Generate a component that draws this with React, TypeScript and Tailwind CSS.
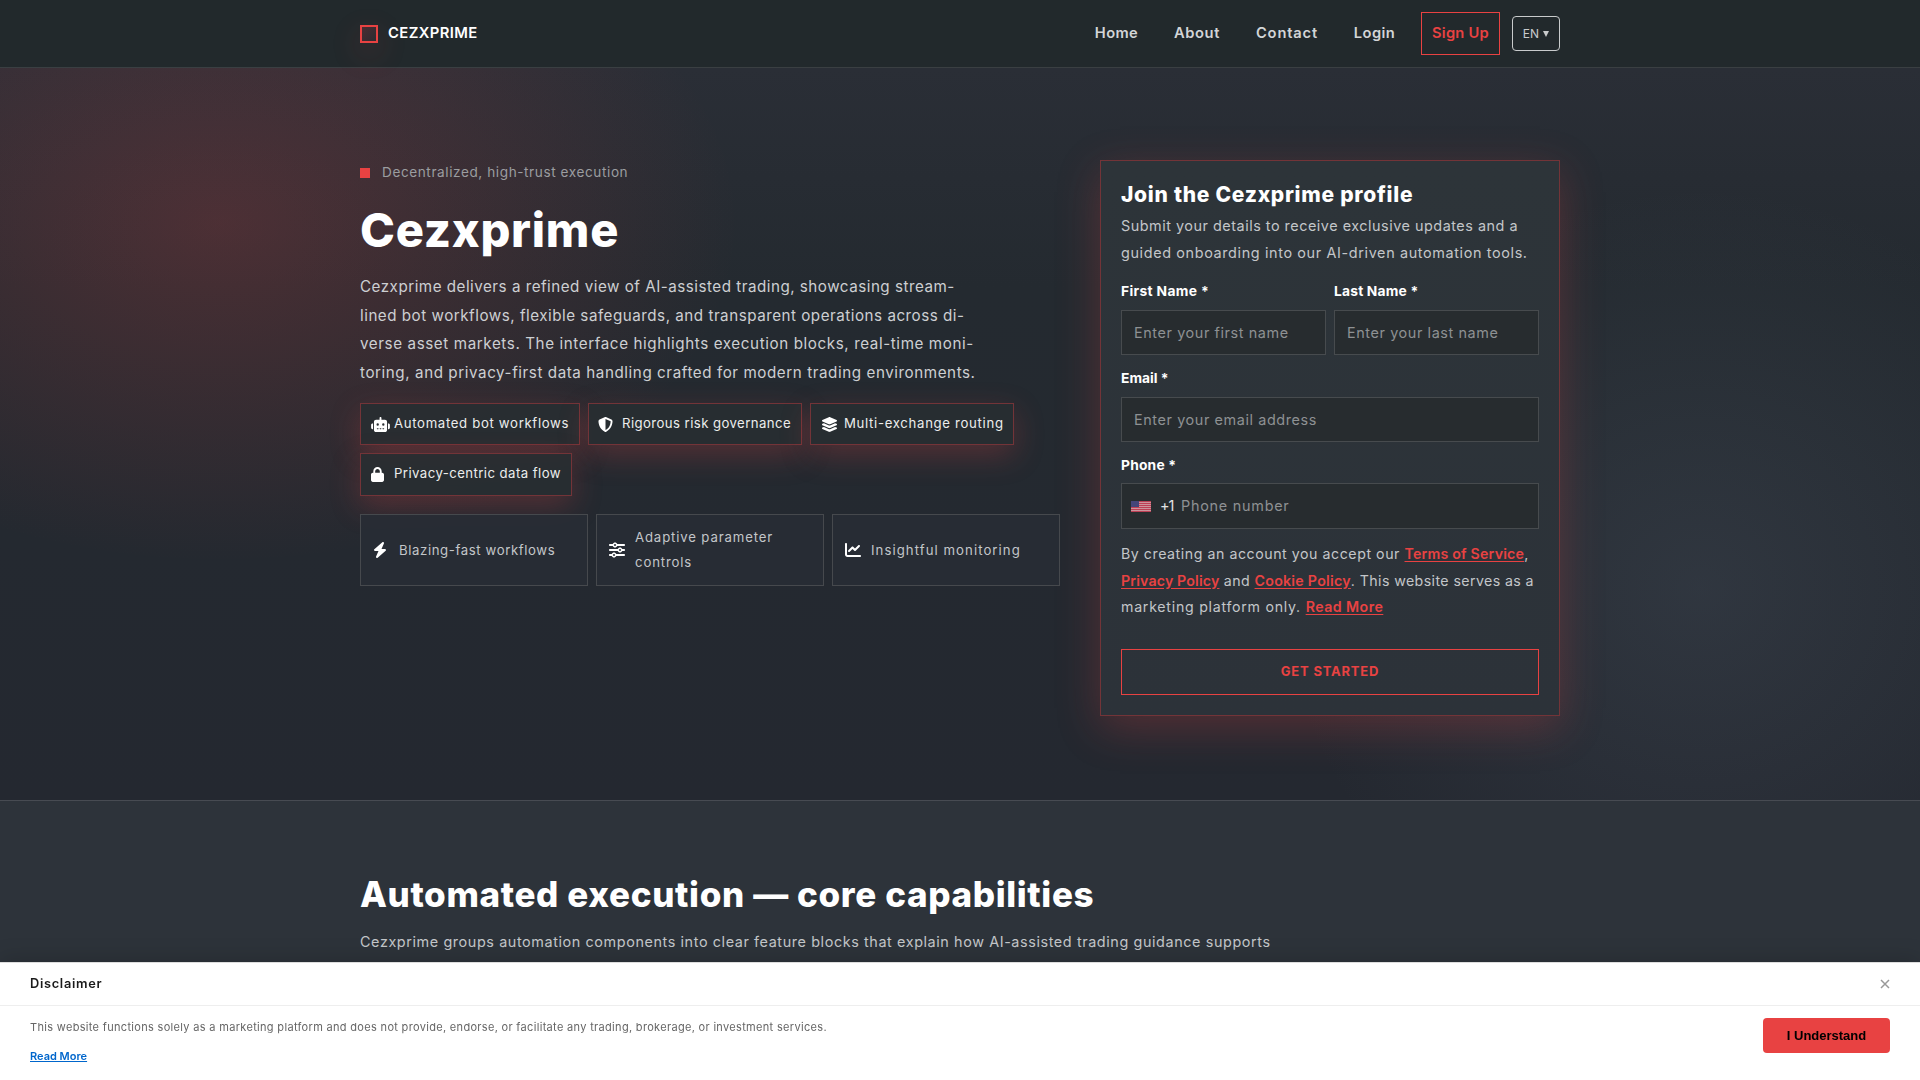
import {
  FaBolt,
  FaChartLine,
  FaLayerGroup,
  FaLock,
  FaRobot,
  FaShieldHalved,
  FaSliders,
} from "react-icons/fa6";

const navLinks = [
  { label: "Home", style: "w-[63px] tracking-[0.4px]" },
  { label: "About", style: "w-[66px] tracking-[0.6px]" },
  { label: "Contact", style: "w-[82px] tracking-[0.85px]" },
  { label: "Login", style: "w-[61px] tracking-[0.45px]" },
];

const introLines = [
  { text: "Cezxprime delivers a refined view of AI-assisted trading, showcasing stream-", style: "tracking-[0.5px]" },
  { text: "lined bot workflows, flexible safeguards, and transparent operations across di-", style: "tracking-[0.51px]" },
  { text: "verse asset markets. The interface highlights execution blocks, real-time moni-", style: "tracking-[0.595px]" },
  { text: "toring, and privacy-first data handling crafted for modern trading environments.", style: "tracking-[0.567px]" },
];

const chips = [
  { icon: <FaRobot className="w-[19px] h-[15px]" />, label: "Automated bot workflows", style: "w-[220px] h-[42px] tracking-[0.66px]" },
  { icon: <FaShieldHalved className="-ml-px w-[15px] h-[15px]" />, label: "Rigorous risk governance", style: "w-[214px] h-[42px] tracking-[0.42px]" },
  { icon: <FaLayerGroup className="w-[17px] h-[15px]" />, label: "Multi-exchange routing", style: "w-[204px] h-[42px] tracking-[0.675px]" },
  { icon: <FaLock className="w-[13px] h-[15px]" />, label: "Privacy-centric data flow", style: "w-[212px] h-[43px] pb-px tracking-[0.43px]" },
];

const highlights = [
  { icon: <FaBolt className="w-[14px] h-4" />, label: "Blazing-fast workflows", style: "tracking-[0.6px]" },
  { icon: <FaSliders className="w-4 h-4" />, label: "Adaptive parameter controls", style: "pb-px tracking-[0.85px]" },
  { icon: <FaChartLine className="w-4 h-4" />, label: "Insightful monitoring", style: "tracking-[1.05px]" },
];

function Field({ label, placeholder, style }: { label: string; placeholder: string; style: string }) {
  return (
    <label className="block flex-1">
      <span className={`block text-[13.8px] leading-6 font-bold text-white ${style}`}>{label}</span>
      <input
        className="mt-[7px] block w-full h-[45px] px-3 border border-[#474b4e] bg-[#272c2f] text-[14.4px] tracking-[0.6px] text-white outline-none placeholder:text-[#8e9193]"
        placeholder={placeholder}
      />
    </label>
  );
}

function Flag() {
  return (
    <svg viewBox="0 0 20 11" className="w-5 h-[11px] opacity-85">
      <rect width="20" height="11" fill="#f2d5d8" />
      {[0, 2, 4, 6, 8, 10].map((y) => (
        <rect key={y} y={y} width="20" height="1.1" fill="#d9455c" />
      ))}
      <rect width="20" height="11" fill="#d9455c" opacity="0.25" />
      <rect width="8" height="6" fill="#4a4a86" />
    </svg>
  );
}

function TermsLink({ children, style }: { children: string; style: string }) {
  return (
    <a href="#" className={`text-[#e84242] font-semibold underline underline-offset-2 ${style}`}>
      {children}
    </a>
  );
}

function Header() {
  return (
    <header className="h-[68px] border-b border-[#3a3f42] bg-[#22292c]">
      <div className="w-[1200px] mx-auto h-[67px] flex items-center">
        <div className="flex items-center gap-[10px]">
          <span className="w-[18px] h-[18px] border-2 border-[#e84242] bg-gradient-to-br from-[#4a2c32] to-[#2b2c31] shadow-[0_10px_30px_rgba(232,66,66,0.22)]" />
          <span className="text-[14.8px] font-semibold text-white tracking-[0.4px]">CEZXPRIME</span>
        </div>
        <nav className="ml-auto flex items-center gap-4 text-[14.7px] font-semibold text-[#d3d5d7]">
          {navLinks.map((link) => (
            <a key={link.label} href="#" className={`text-center whitespace-nowrap ${link.style}`}>
              {link.label}
            </a>
          ))}
          <a href="#" className="w-[79px] h-[43px] flex items-center justify-center border border-[#e84242] text-[#e84242] tracking-[0.25px] whitespace-nowrap">
            Sign Up
          </a>
        </nav>
        <button className="ml-3 w-12 h-[35px] flex items-center justify-center gap-1 rounded border border-[#c9cbcc] text-[12px] text-[#c9cbcc]">
          EN
          <svg viewBox="0 0 6 6" className="w-[6px] h-[6px]">
            <path d="M0 0h6L3 6z" fill="currentColor" />
          </svg>
        </button>
      </div>
    </header>
  );
}

function SignupCard() {
  return (
    <form className="w-[460px] p-5 border border-[#733438] bg-gradient-to-b from-[#2d3439] to-[#2c3239] shadow-[0_12px_40px_rgba(232,66,66,0.25)]">
      <h2 className="pt-px text-[21px] leading-[26px] font-extrabold text-white tracking-[0.73px] whitespace-nowrap">
        Join the Cezxprime profile
      </h2>
      <p className="mt-1 text-[14.4px] leading-[27px] text-[#c3c6c9] whitespace-nowrap">
        <span className="block tracking-[0.517px]">Submit your details to receive exclusive updates and a</span>
        <span className="block tracking-[0.635px]">guided onboarding into our AI-driven automation tools.</span>
      </p>

      <div className="mt-[13px] flex gap-2">
        <Field label="First Name *" placeholder="Enter your first name" style="tracking-[0.35px]" />
        <Field label="Last Name *" placeholder="Enter your last name" style="tracking-[0.2px]" />
      </div>
      <div className="mt-[11px] flex">
        <Field label="Email *" placeholder="Enter your email address" style="tracking-[0px]" />
      </div>

      <div className="mt-[11px]">
        <span className="block text-[13.8px] leading-6 font-bold text-white tracking-[0.2px]">Phone *</span>
        <div className="mt-[6px] h-[46px] pl-[9px] flex items-center border border-[#474b4e] bg-[#272c2f] text-[14.4px]">
          <Flag />
          <span className="ml-[9px] w-[21px] text-[#e2e3e4] whitespace-nowrap tracking-[-1px]">+1</span>
          <input
            className="flex-1 min-w-0 bg-transparent tracking-[0.75px] text-white outline-none placeholder:text-[#8e9193]"
            placeholder="Phone number"
          />
        </div>
      </div>

      <p className="mt-3 text-[14.2px] leading-[26.5px] text-[#c3c6c9] whitespace-nowrap">
        <span className="block tracking-[0.54px]">
          By creating an account you accept our <TermsLink style="tracking-[0.2px]">Terms of Service</TermsLink>,
        </span>
        <span className="block tracking-[0.4px]">
          <TermsLink style="tracking-[0.15px]">Privacy Policy</TermsLink> and{" "}
          <TermsLink style="tracking-[0.26px]">Cookie Policy</TermsLink>. This website serves as a
        </span>
        <span className="block tracking-[0.73px]">
          marketing platform only. <TermsLink style="tracking-[0.45px]">Read More</TermsLink>
        </span>
      </p>

      <button
        type="button"
        className="mt-7 w-full h-[46px] border border-[#e84242] text-[13px] font-bold text-[#e84242] tracking-[0.79px]"
      >
        GET STARTED
      </button>
    </form>
  );
}

function Hero() {
  return (
    <section className="h-[733px] pt-[92px] border-b border-[#474b52] bg-[radial-gradient(ellipse_520px_340px_at_220px_155px,rgba(232,66,66,0.2),transparent),radial-gradient(ellipse_420px_400px_at_1700px_520px,rgba(110,125,145,0.16),transparent),linear-gradient(180deg,#2a2e36_0%,#242a30_30%,#242830_100%)]">
      <div className="w-[1200px] mx-auto flex items-start gap-10">
        <div className="w-[700px]">
          <div className="flex items-center gap-3 h-[25px]">
            <span className="w-[10px] h-[10px] bg-[#e84242]" />
            <span className="text-[13.6px] text-[#9b9da0] tracking-[0.58px]">Decentralized, high-trust execution</span>
          </div>
          <h1 className="mt-4 text-[47px] leading-[58px] font-extrabold text-white tracking-[0.75px]">Cezxprime</h1>
          <p className="mt-[14px] text-[15.2px] leading-[28.6px] text-[#cdcfd2] whitespace-nowrap">
            {introLines.map((line) => (
              <span key={line.text} className={`block ${line.style}`}>
                {line.text}
              </span>
            ))}
          </p>

          <div className="mt-4 flex flex-wrap gap-2">
            {chips.map((chip) => (
              <div
                key={chip.label}
                className={`px-[10px] flex items-center border border-[#733438] bg-[#282e31]/85 text-[13.2px] text-[#eceded] whitespace-nowrap shadow-[0_10px_30px_rgba(232,66,66,0.25)] ${chip.style}`}
              >
                <span className="w-[23px] shrink-0 text-white">{chip.icon}</span>
                {chip.label}
              </div>
            ))}
          </div>

          <div className="relative mt-[18px] grid grid-cols-3 gap-2">
            {highlights.map((item) => (
              <div
                key={item.label}
                className={`h-[72px] px-3 flex items-center gap-[10px] border border-[#46494d] bg-[#282c35]/90 text-[13.2px] leading-[24.5px] text-[#c3c6c9] ${item.style}`}
              >
                <span className="w-4 shrink-0 text-white">{item.icon}</span>
                {item.label}
              </div>
            ))}
          </div>
        </div>

        <SignupCard />
      </div>
    </section>
  );
}

function Disclaimer() {
  return (
    <div className="fixed inset-x-0 bottom-0 h-[118px] border-t border-[#dddddd] bg-white shadow-[0_-4px_20px_rgba(0,0,0,0.15)]">
      <div className="h-[43px] px-[30px] flex items-center justify-between border-b border-[#eeeeee]">
        <span className="text-[12.8px] font-semibold text-[#1a1a1a] tracking-[0.7px]">Disclaimer</span>
        <svg viewBox="0 0 10 10" className="w-[10px] h-[10px]" stroke="#999999" strokeWidth="1.5">
          <path d="M1 1l8 8M9 1l-8 8" />
        </svg>
      </div>
      <div className="px-[30px] pt-3 flex items-start justify-between">
        <div className="text-[11px] leading-[19px] whitespace-nowrap">
          <p className="text-[#666666] tracking-[0.32px]">
            This website functions solely as a marketing platform and does not provide, endorse, or facilitate any
            trading, brokerage, or investment services.
          </p>
          <a href="#" className="mt-[10px] block w-fit font-semibold text-[#0066cc] underline">
            Read More
          </a>
        </div>
        <button className="w-[127px] h-[35px] rounded bg-[#e84242] font-['Liberation_Sans',sans-serif] text-[13px] font-bold text-black">
          I Understand
        </button>
      </div>
    </div>
  );
}

export default function App() {
  return (
    <div className="h-[1080px] overflow-hidden bg-[#2d333a] font-['Inter',sans-serif]">
      <Header />
      <Hero />
      <section className="w-[1200px] mx-auto pt-[71px]">
        <h2 className="text-[35px] leading-[44px] font-extrabold text-white tracking-[0.64px]">
          Automated execution — core capabilities
        </h2>
        <p className="mt-3 text-[14.4px] leading-[27px] text-[#c3c6c9] tracking-[0.593px] whitespace-nowrap">
          Cezxprime groups automation components into clear feature blocks that explain how AI-assisted trading guidance
          supports
        </p>
      </section>
      <Disclaimer />
    </div>
  );
}
